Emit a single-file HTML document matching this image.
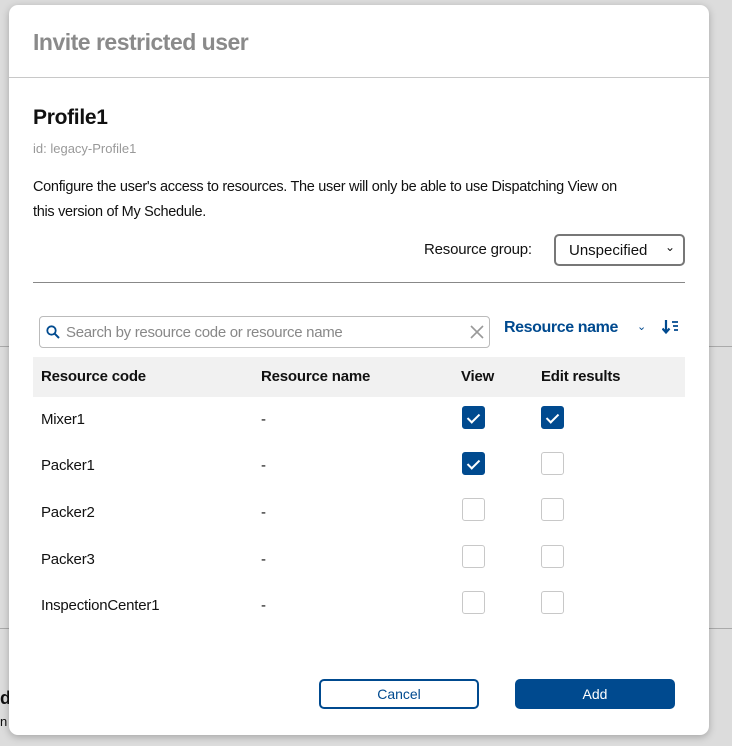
<!DOCTYPE html>
<html><head><style>
*{box-sizing:border-box;margin:0;padding:0}
body{width:732px;height:746px;background:#dcdcdc;font-family:"Liberation Sans",sans-serif;position:relative;overflow:hidden;color:#111}
.bgl{position:absolute;left:0;right:0;height:1px;background:#aaa}
.dlg{position:absolute;left:9px;top:5px;width:700px;height:730px;background:#fff;border-radius:9px;box-shadow:0 2px 8px rgba(0,0,0,.25)}
.t{position:absolute;left:24px;top:24px;font-size:23px;font-weight:bold;color:#8a8a8a;letter-spacing:-.5px}
.hr1{position:absolute;left:0;right:0;top:72px;height:1px;background:#c8c8c8}
.abs{position:absolute}
.cb{position:absolute;width:23px;height:23px;border:1px solid #c8c8c8;border-radius:3px;background:#fff}
.cb.on{background:#004a8f;border-color:#004a8f}
.cb.on:after{content:"";position:absolute;left:7px;top:4px;width:5px;height:10px;border:solid #fff;border-width:0 2.5px 2.5px 0;transform:rotate(45deg)}
.row{position:absolute;left:32px;font-size:15px;letter-spacing:-.2px}
</style></head><body>
<div class="bgl" style="top:346px"></div>
<div class="bgl" style="top:628px"></div>
<div class="abs" style="left:0;top:688px;font-size:18px;font-weight:bold">d</div>
<div class="abs" style="left:0;top:714px;font-size:13px">n</div>
<div class="dlg">
<div class="t">Invite restricted user</div>
<div class="hr1"></div>
<div class="abs" style="left:24px;top:101px;font-size:21px;font-weight:bold;letter-spacing:-.3px">Profile1</div>
<div class="abs" style="left:24px;top:136px;font-size:13px;color:#999">id: legacy-Profile1</div>
<div class="abs" style="left:24px;top:170px;width:660px;font-size:14.5px;line-height:25px;letter-spacing:-.3px">Configure the user's access to resources. The user will only be able to use Dispatching View on<br>this version of My Schedule.</div>
<div class="abs" style="left:415px;top:236px;font-size:15px;letter-spacing:-.2px">Resource group:</div>
<div class="abs" style="left:545px;top:229px;width:131px;height:32px;border:2px solid #777;border-radius:5px;font-size:15px;padding:6px 0 0 13px">Unspecified<span style="position:absolute;right:8px;top:4px;font-size:12px">&#8964;</span></div>
<div class="abs" style="left:24px;top:277px;width:652px;height:1px;background:#888"></div>
<div class="abs" style="left:30px;top:311px;width:451px;height:32px;border:1px solid #bbb;border-radius:4px">
<svg class="abs" style="left:6px;top:8px" width="14" height="14" viewBox="0 0 14 14"><circle cx="5.5" cy="5.5" r="4.2" fill="none" stroke="#004a8f" stroke-width="1.8"/><path d="M8.6 8.6L13 13" stroke="#004a8f" stroke-width="2"/></svg>
<span class="abs" style="left:26px;top:7px;font-size:15px;color:#888;letter-spacing:-.3px">Search by resource code or resource name</span>
<svg class="abs" style="left:430px;top:8px" width="14" height="14"><path d="M1 1L13 13M13 1L1 13" stroke="#999" stroke-width="1.6"/></svg>
</div>
<div class="abs" style="left:495px;top:314px;font-size:16px;font-weight:bold;color:#004a8f;letter-spacing:-.4px">Resource name</div>
<div class="abs" style="left:628px;top:315px;font-size:11px;color:#004a8f">&#8964;</div>
<svg class="abs" style="left:653px;top:314px" width="18" height="16"><path d="M4 1V13M0.5 9.5L4 13.5L7.5 9.5" stroke="#004a8f" stroke-width="2.2" fill="none"/><path d="M10 3H16M11 7H16M12 11H16" stroke="#004a8f" stroke-width="1.8"/></svg>
<div class="abs" style="left:24px;top:352px;width:652px;height:40px;background:#f1f1f1"></div>
<div class="row" style="top:363px;font-weight:bold">Resource code</div>
<div class="row" style="left:252px;top:363px;font-weight:bold">Resource name</div>
<div class="row" style="left:452px;top:363px;font-weight:bold">View</div>
<div class="row" style="left:532px;top:363px;font-weight:bold">Edit results</div>

<div class="row" style="top:406px">Mixer1</div><div class="row" style="left:252px;top:406px">-</div>
<div class="cb on" style="left:453px;top:401px"></div><div class="cb on" style="left:532px;top:401px"></div>
<div class="row" style="top:452px">Packer1</div><div class="row" style="left:252px;top:452px">-</div>
<div class="cb on" style="left:453px;top:447px"></div><div class="cb" style="left:532px;top:447px"></div>
<div class="row" style="top:499px">Packer2</div><div class="row" style="left:252px;top:499px">-</div>
<div class="cb" style="left:453px;top:493px"></div><div class="cb" style="left:532px;top:493px"></div>
<div class="row" style="top:546px">Packer3</div><div class="row" style="left:252px;top:546px">-</div>
<div class="cb" style="left:453px;top:540px"></div><div class="cb" style="left:532px;top:540px"></div>
<div class="row" style="top:592px">InspectionCenter1</div><div class="row" style="left:252px;top:592px">-</div>
<div class="cb" style="left:453px;top:586px"></div><div class="cb" style="left:532px;top:586px"></div>

<div class="abs" style="left:310px;top:674px;width:160px;height:30px;border:2px solid #004a8f;border-radius:5px;color:#004a8f;font-size:14px;text-align:center;line-height:26px">Cancel</div>
<div class="abs" style="left:506px;top:674px;width:160px;height:30px;background:#004a8f;border-radius:5px;color:#fff;font-size:14px;text-align:center;line-height:30px">Add</div>
</div>
</body></html>
